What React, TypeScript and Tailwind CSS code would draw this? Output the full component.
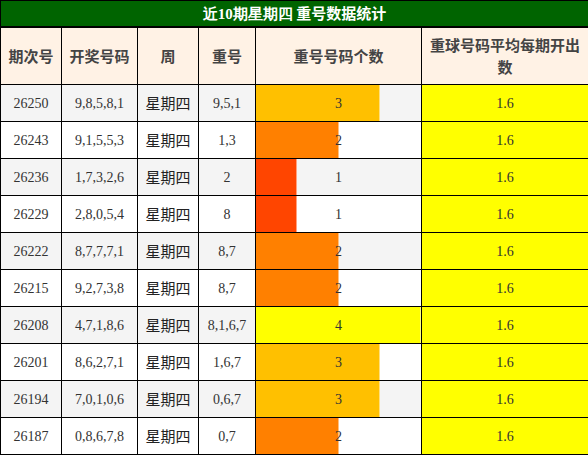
import React from 'react';

type Row = {
  issue: string;
  nums: string;
  week: string;
  repeat: string;
  count: number;
};

const rows: Row[] = [
  { issue: '26250', nums: '9,8,5,8,1', week: '星期四', repeat: '9,5,1', count: 3 },
  { issue: '26243', nums: '9,1,5,5,3', week: '星期四', repeat: '1,3', count: 2 },
  { issue: '26236', nums: '1,7,3,2,6', week: '星期四', repeat: '2', count: 1 },
  { issue: '26229', nums: '2,8,0,5,4', week: '星期四', repeat: '8', count: 1 },
  { issue: '26222', nums: '8,7,7,7,1', week: '星期四', repeat: '8,7', count: 2 },
  { issue: '26215', nums: '9,2,7,3,8', week: '星期四', repeat: '8,7', count: 2 },
  { issue: '26208', nums: '4,7,1,8,6', week: '星期四', repeat: '8,1,6,7', count: 4 },
  { issue: '26201', nums: '8,6,2,7,1', week: '星期四', repeat: '1,6,7', count: 3 },
  { issue: '26194', nums: '7,0,1,0,6', week: '星期四', repeat: '0,6,7', count: 3 },
  { issue: '26187', nums: '0,8,6,7,8', week: '星期四', repeat: '0,7', count: 2 },
];

// 个数对应的条形颜色
const barColor: Record<number, string> = {
  1: '#ff4500',
  2: '#ff8000',
  3: '#ffc000',
  4: '#ffff00',
};

const serif = "font-['Liberation_Serif','Noto_Sans_CJK_SC',serif]";
const cjk = "font-['Noto_Sans_CJK_SC',sans-serif]";

export default function App() {
  return (
    <div className="w-[588px] h-[455px] bg-white overflow-hidden">
      <table className="w-[588px] table-fixed border-collapse border border-black text-[14px] text-[#333]">
        <colgroup>
          <col className="w-[61px]" />
          <col className="w-[76px]" />
          <col className="w-[61px]" />
          <col className="w-[57px]" />
          <col className="w-[166px]" />
          <col className="w-[167px]" />
        </colgroup>
        <thead>
          <tr className="h-[26px]">
            <th
              colSpan={6}
              className={`bg-[#006400] border-b-2 border-black text-white text-[15px] font-bold leading-none ${cjk}`}
            >
              <span className="font-['Liberation_Serif',serif]">近10期星期四</span> 重号数据统计
            </th>
          </tr>
          <tr className={`h-[58px] bg-[#fff2e5] text-[#444] text-[15px] font-bold ${cjk}`}>
            <th className="border border-black">期次号</th>
            <th className="border border-black">开奖号码</th>
            <th className="border border-black">周</th>
            <th className="border border-black">重号</th>
            <th className="border border-black">重号号码个数</th>
            <th className="border border-black px-1 leading-[22px]">重球号码平均每期开出数</th>
          </tr>
        </thead>
        <tbody>
          {rows.map((r, i) => (
            <tr key={r.issue} className={`h-[37px] ${i % 2 === 0 ? 'bg-[#f4f4f4]' : 'bg-white'}`}>
              <td className={`border border-black text-center ${serif}`}>{r.issue}</td>
              <td className={`border border-black text-center ${serif}`}>{r.nums}</td>
              <td className={`border border-black text-center text-[15px] text-[#222] ${cjk}`}>{r.week}</td>
              <td className={`border border-black text-center ${serif}`}>{r.repeat}</td>
              <td className="border border-black p-0 relative">
                <div
                  className="absolute left-0 top-0 bottom-0 border-r border-white/50"
                  style={{ width: `${(r.count / 4) * 100}%`, backgroundColor: barColor[r.count] }}
                />
                <div className={`relative text-center ${serif}`}>{r.count}</div>
              </td>
              <td className={`border border-black text-center bg-[#ffff00] ${serif}`}>1.6</td>
            </tr>
          ))}
        </tbody>
      </table>
    </div>
  );
}
